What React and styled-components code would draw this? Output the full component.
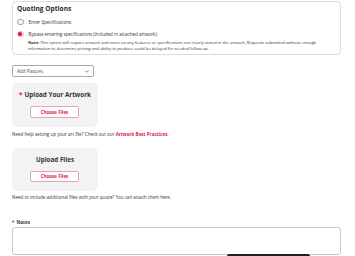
import React from "react";
import styled, { createGlobalStyle } from "styled-components";

const Global = createGlobalStyle`
  html, body { margin: 0; padding: 0; background: #fff; }
  body { font-family: "Open Sans", "Liberation Sans", sans-serif; color: #333; }
  * { box-sizing: border-box; }
`;

const RED = "#dc1a44";

const Page = styled.div`
  position: relative;
  width: 355px;
  height: 256px;
  overflow: hidden;
  padding: 1px 14px 0 12px;
`;

const Card = styled.section`
  border: 1px solid #dcdcdc;
  border-radius: 4px;
  padding: 2px 5px 3px 4px;
  height: 54px;
`;

const CardTitle = styled.h2`
  margin: 0;
  font-size: 6.6px;
  line-height: 9px;
  font-weight: 700;
  color: #2b2b2b;
`;

const RadioRow = styled.label`
  display: flex;
  align-items: center;
  gap: 5px;
  height: 8px;
  margin-top: ${(p) => p.$mt}px;
  font-size: ${(p) => p.$size}px;
  color: #333;
  white-space: nowrap;
`;

const RadioDot = styled.span`
  width: 6.5px;
  height: 6.5px;
  border-radius: 50%;
  flex: none;
  display: flex;
  align-items: center;
  justify-content: center;
  border: 1px solid ${(p) => (p.$checked ? "#f4b3c1" : "#9a9a9a")};
  background: #fff;
  &::after {
    content: "";
    width: 3.6px;
    height: 3.6px;
    border-radius: 50%;
    background: ${(p) => (p.$checked ? RED : "transparent")};
  }
`;

const Note = styled.p`
  margin: 2px 0 0 11px;
  font-size: 4.1px;
  line-height: 6px;
  color: #333;
  b { font-weight: 700; }
`;

const NoteLine = styled.span`
  display: block;
  white-space: nowrap;
  height: 6px;
`;

const Select = styled.div`
  margin-top: 10px;
  width: 82px;
  height: 12px;
  border: 1px solid #a9a9a9;
  border-radius: 2px;
  display: flex;
  align-items: center;
  justify-content: space-between;
  padding: 0 4px 0 4px;
  font-size: 4.5px;
  color: #555;
`;

const UploadBox = styled.div`
  margin-top: ${(p) => p.$mt}px;
  width: 86px;
  background: #f3f3f3;
  border-radius: 5px;
  padding: 8px 0 9px;
  display: flex;
  flex-direction: column;
  align-items: center;
`;

const BoxTitle = styled.div`
  font-size: 6.3px;
  line-height: 8px;
  font-weight: 700;
  color: #333;
  white-space: nowrap;
  span { color: ${RED}; margin-right: 2px; }
`;

const ChooseButton = styled.button`
  margin-top: 7px;
  width: 49px;
  height: 11.5px;
  border: 1px solid #eba2b1;
  border-radius: 2px;
  background: #fff;
  color: ${RED};
  font-family: inherit;
  font-size: 4.5px;
  font-weight: 700;
  padding: 0;
  margin-left: -1px;
`;

const HelpText = styled.p`
  margin: ${(p) => p.$mt}px 0 0;
  font-size: 4.55px;
  line-height: 6px;
  color: #333;
  white-space: nowrap;
  a { color: ${RED}; font-weight: 700; text-decoration: none; }
`;

const FieldLabel = styled.div`
  margin-top: 19px;
  font-size: 4.5px;
  line-height: 6px;
  font-weight: 700;
  color: #333;
  span { color: ${RED}; margin-right: 1px; }
`;

const TextArea = styled.div`
  margin-top: 2px;
  width: 329px;
  height: 28px;
  border: 1px solid #c8c8c8;
  border-radius: 3px;
  background: #fff;
`;

const StickyButton = styled.div`
  position: absolute;
  left: 227px;
  top: 254px;
  width: 83px;
  height: 10px;
  background: #222;
  border-radius: 2px 2px 0 0;
`;

function Chevron() {
  return (
    <svg width="4" height="3" viewBox="0 0 8 5" fill="none">
      <path d="M1 1l3 3 3-3" stroke={RED} strokeWidth="1.4" strokeLinecap="round" strokeLinejoin="round" />
    </svg>
  );
}

export default function App() {
  return (
    <>
      <Global />
      <Page>
        <Card>
          <CardTitle>Quoting Options</CardTitle>
          <RadioRow $mt={5} $size={4.7}>
            <RadioDot />
            Enter Specifications
          </RadioRow>
          <RadioRow $mt={4} $size={4.55}>
            <RadioDot $checked />
            Bypass entering specifications (included in attached artwork)
          </RadioRow>
          <Note>
            <NoteLine>
              <b>Note:</b> This option will require artwork and notes on any features or specifications not clearly stated in the artwork. Requests submitted without enough
            </NoteLine>
            <NoteLine>
              information to determine pricing and ability to produce could be delayed for needed follow-up.
            </NoteLine>
          </Note>
        </Card>

        <Select>
          Add Plaques
          <Chevron />
        </Select>

        <UploadBox $mt={6}>
          <BoxTitle><span>*</span>Upload Your Artwork</BoxTitle>
          <ChooseButton>Choose Files</ChooseButton>
        </UploadBox>
        <HelpText $mt={4}>
          Need help setting up your art file? Check out our <a href="#">Artwork Best Practices</a>.
        </HelpText>

        <UploadBox $mt={11}>
          <BoxTitle>Upload Files</BoxTitle>
          <ChooseButton>Choose Files</ChooseButton>
        </UploadBox>
        <HelpText $mt={3}>
          Need to include additional files with your quote? You can attach them here.
        </HelpText>

        <FieldLabel><span>*</span> Notes</FieldLabel>
        <TextArea />
        <StickyButton />
      </Page>
    </>
  );
}
